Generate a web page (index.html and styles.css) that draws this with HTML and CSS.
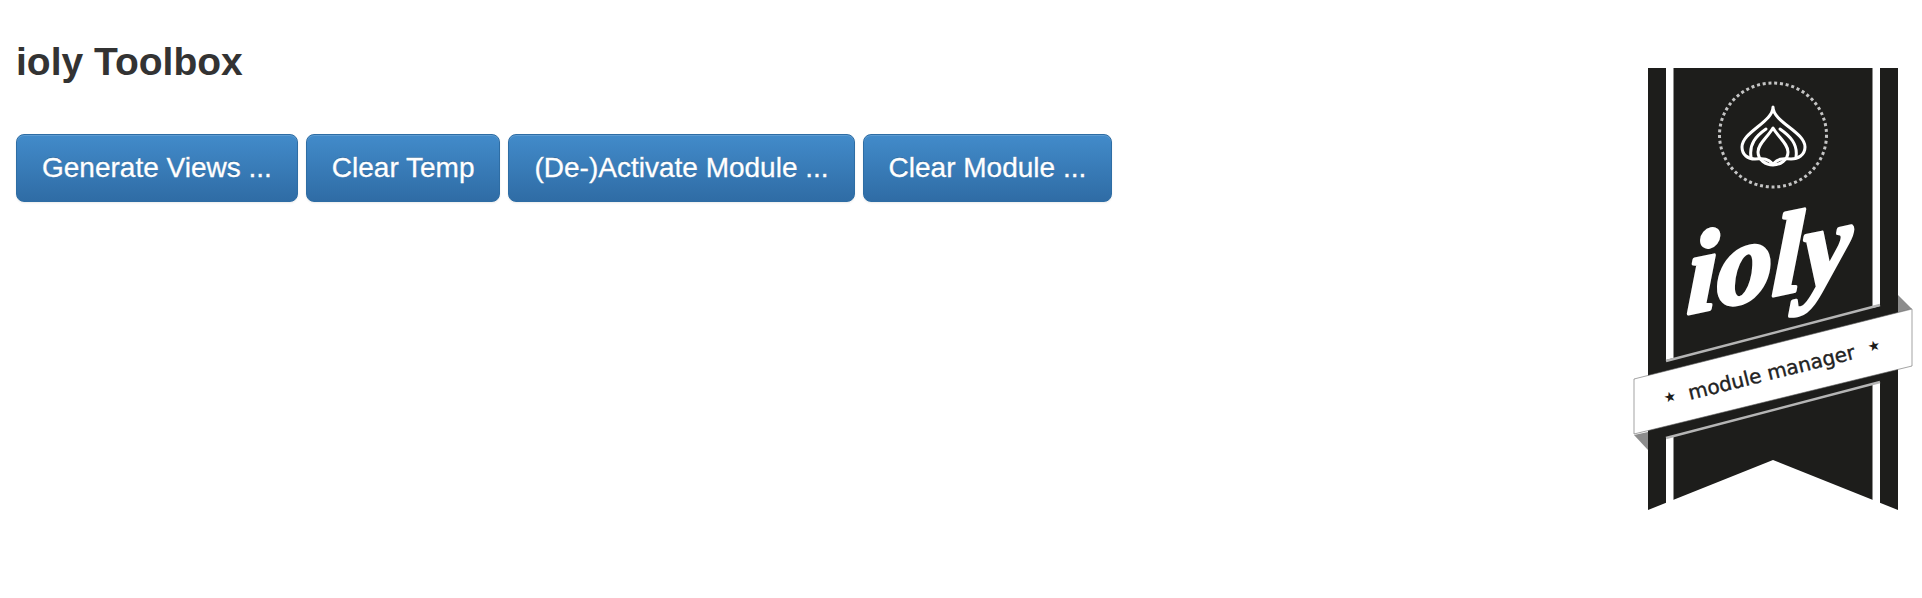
FILE: index.html
```html
<!DOCTYPE html>
<html>
<head>
<title>ioly Toolbox</title>
<meta charset="utf-8">
  <link rel="stylesheet" href="styles.css">
</head>
<body>
<div class="page">
  <div class="toolbox">
    <h1 class="toolbox__title">ioly Toolbox</h1>
    <div class="toolbox__buttons">
      <button class="btn" type="button">Generate Views ...</button>
      <button class="btn" type="button">Clear Temp</button>
      <button class="btn" type="button">(De-)Activate Module ...</button>
      <button class="btn" type="button">Clear Module ...</button>
    </div>
  </div>
  <svg class="logo" viewBox="0 0 302 480" width="302" height="480">
    <!-- ribbon -->
    <polygon class="logo__black" points="28,18 278,18 278,460 153,410 28,460"/>
    <polygon class="logo__white" points="46,18 53.5,18 53.5,308 46,310"/>
    <polygon class="logo__white" points="252.5,18 260,18 260,256 252.5,258"/>
    <polygon class="logo__white" points="46,388 53.5,386 53.5,470 46,470"/>
    <polygon class="logo__white" points="252.5,334 260,332 260,470 252.5,470"/>
    <!-- medallion -->
    <ellipse class="logo__dots" cx="153" cy="85" rx="53.5" ry="52"/>
    <path class="logo__line" d="M153 57 C153 72 122 82 122 97 C122 105 128 109 135 109 C142 109 146 107 153 114 C160 107 164 109 171 109 C178 109 185 105 185 97 C185 82 153 72 153 57 Z"/>
    <path class="logo__line" d="M153 78 C147 88 138 94 138 102 C138 110 146 115 153 115 C160 115 168 110 168 102 C168 94 159 88 153 78 Z"/>
    <path class="logo__line" d="M146 79 C136 86 129 94 131 107 M160 79 C170 86 178 94 176 107"/>
    <text class="logo__name" transform="translate(66 264) rotate(-12) skewX(-14)">ioly</text>
    <!-- band -->
    <polygon class="logo__fold" points="278,245 292,259 278,263"/>
    <polygon class="logo__fold" points="14,385 28,400 28,382"/>
    <line class="logo__rule" x1="46" y1="311" x2="260" y2="255"/>
    <line class="logo__rule" x1="46" y1="388" x2="260" y2="332"/>
    <polygon class="logo__band" points="14,329 292,259 292,316 14,384"/>
    <text class="logo__sub" transform="translate(70 350) rotate(-14)">module manager</text>
    <text class="logo__star" transform="translate(45 353) rotate(-14)">★</text>
    <text class="logo__star" transform="translate(249 302) rotate(-14)">★</text>
  </svg>
</div>
</body>
</html>
```

FILE: styles.css
```css
*,
*::before,
*::after {
  box-sizing: border-box;
}

body {
  margin: 0;
  background: #fff;
  font-family: "Liberation Sans", Arial, sans-serif;
  color: #333;
}

.page {
  display: flex;
  justify-content: space-between;
  align-items: flex-start;
  height: 598px;
  overflow: hidden;
  padding: 0 0 0 16px;
}

.toolbox__title {
  margin: 41px 0 0;
  font-size: 39px;
  line-height: 42px;
  font-weight: bold;
}

.toolbox__buttons {
  display: flex;
  gap: 8px;
  margin: 51px 0 0 0;
}

.btn {
  height: 68px;
  padding: 0 25px;
  border: 1px solid #2e6da4;
  border-radius: 8px;
  background: linear-gradient(to bottom, #428bca, #2f6ca5);
  box-shadow: inset 0 1px 0 rgba(255, 255, 255, 0.15), 0 1px 2px rgba(0, 0, 0, 0.08);
  color: #fff;
  font-family: inherit;
  font-size: 28px;
  -webkit-text-stroke: 0.3px #fff;
  text-shadow: 0 -1px 0 rgba(0, 0, 0, 0.2);
}

.logo {
  flex: none;
  margin-top: 50px;
}

.logo__black { fill: #1d1d1b; }
.logo__white { fill: #fff; }
.logo__fold { fill: #8c8c8c; }
.logo__band { fill: #fff; stroke: #666; stroke-width: 0.6; }

.logo__dots {
  fill: none;
  stroke: #c4c4c4;
  stroke-width: 3;
  stroke-dasharray: 3 2.8;
}

.logo__line {
  fill: none;
  stroke: #fff;
  stroke-width: 3;
  stroke-linejoin: round;
  stroke-linecap: round;
}

.logo__rule {
  stroke: #b5b5b5;
  stroke-width: 2.5;
}

.logo__name {
  fill: #fff;
  stroke: #fff;
  stroke-width: 4;
  stroke-linejoin: round;
  font-family: "Liberation Serif", serif;
  font-style: italic;
  font-weight: bold;
  font-size: 112px;
}

.logo__sub {
  fill: #222;
  stroke: #222;
  stroke-width: 0.4;
  font-family: "DejaVu Sans", sans-serif;
  font-size: 20px;
}

.logo__star {
  fill: #1d1d1b;
  font-family: "DejaVu Sans", sans-serif;
  font-size: 14px;
}
```
